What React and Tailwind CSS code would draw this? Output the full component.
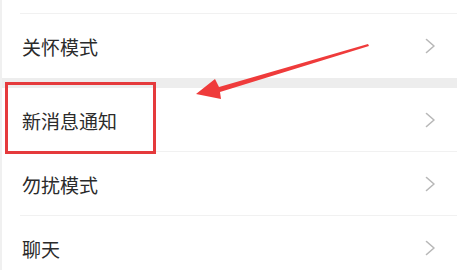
const font = { fontFamily: '"Noto Sans CJK SC", "Noto Sans", sans-serif' };

function Chevron() {
  return (
    <svg width="11" height="16" viewBox="0 0 11 16" fill="none">
      <polyline points="1.5,1.5 9,8 1.5,14.5" stroke="#b8b8b8" strokeWidth="1.6" strokeLinecap="round" strokeLinejoin="round" />
    </svg>
  );
}

function Row({ label, divider = true }) {
  return (
    <div className="relative flex h-[64px] items-center justify-between pl-[20px] pr-[21px]">
      <span className="text-[19px] leading-none text-[#2b2b2b]">{label}</span>
      <Chevron />
      {divider && <div className="absolute bottom-0 left-[18px] right-0 h-px bg-[#f1f1f1]" />}
    </div>
  );
}

export default function App() {
  return (
    <div className="relative h-[270px] w-[457px] overflow-hidden bg-white" style={font}>
      <div className="border-l-2 border-[#f0f0f0]">
        <div className="relative h-[14px]">
          <div className="absolute bottom-0 left-[18px] right-0 h-px bg-[#f1f1f1]" />
        </div>
        <Row label="关怀模式" divider={false} />
        <div className="h-[10px] bg-[#ededed]" />
        <Row label="新消息通知" />
        <Row label="勿扰模式" />
        <Row label="聊天" divider={false} />
      </div>

      {/* annotation box */}
      <div className="absolute left-[5px] top-[82px] h-[72px] w-[151px] border-[3px] border-[#e53a3c]" />

      {/* annotation arrow */}
      <svg className="absolute left-0 top-0" width="457" height="270" viewBox="0 0 457 270">
        <polygon
          points="368,44 219,87 215,79 196,94 221,99 220,92 369,46"
          fill="#ef3b3b"
        />
      </svg>
    </div>
  );
}
